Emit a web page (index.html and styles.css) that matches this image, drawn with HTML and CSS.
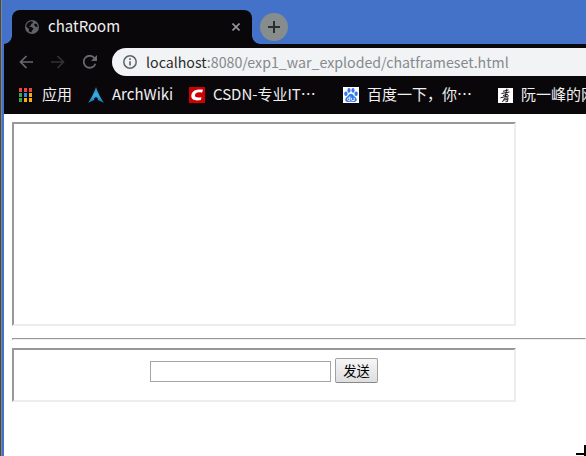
FILE: index.html
```html
<!DOCTYPE html>
<html lang="zh-CN">
<head>
<meta charset="utf-8">
<title>chatRoom</title>
<link rel="stylesheet" href="styles.css">
</head>
<body>
<div class="window">
  <header class="chrome">
    <div class="tabstrip">
      <div class="tab">
        <svg class="globe" viewBox="0 0 14 14"><circle cx="7" cy="7" r="7" fill="#5f6368"/><path d="M6.8 1.2C9 2 7.5 3.7 6.2 3.7L5.8 5.5 3.7 6.2 7 7.2 8.7 8.7 7.4 10.1 6.3 12.4 3.8 11.3 4 9 1.3 6.8C1.2 3.9 3.5 1.2 6.8 1.2Z M9 4.8L10.2 3.6 12 4.2 12.7 7.2 10.6 6.8Z" fill="#0a070b"/></svg>
        <span class="tab-title">chatRoom</span>
        <svg class="close" viewBox="0 0 8 8"><path d="M.5.5l7 7M7.5.5l-7 7" stroke="#92979b" stroke-width="1.6"/></svg>
      </div>
      <div class="new-tab"><svg viewBox="0 0 12 12"><path d="M6 0v12M0 6h12" stroke="#2b2e30" stroke-width="2"/></svg></div>
    </div>
    <div class="toolbar">
      <svg class="nav" viewBox="0 0 14 14"><path d="M14 7H1.5M7.5 1l-6 6 6 6" fill="none" stroke="#66696d" stroke-width="1.7"/></svg>
      <svg class="nav forward" viewBox="0 0 14 14"><path d="M0 7h12.5M6.5 1l6 6-6 6" fill="none" stroke="#343235" stroke-width="1.7"/></svg>
      <svg class="nav reload" viewBox="0 0 14 14"><path d="M12.4 8.7A6 6 0 1 1 11.5 3.1" fill="none" stroke="#66696d" stroke-width="1.8"/><path d="M14 0v6H8z" fill="#66696d"/></svg>
      <div class="address">
        <svg class="info" viewBox="0 0 14 14"><circle cx="7" cy="7" r="6.2" fill="none" stroke="#5f6368" stroke-width="1.5"/><path d="M7 6.2v4.3M7 3.3v1.6" stroke="#5f6368" stroke-width="1.6"/></svg>
        <span class="url"><span class="host">localhost</span>:8080/exp1_war_exploded/chatframeset.html</span>
      </div>
    </div>
    <nav class="bookmarks">
      <div class="bookmark apps">
        <svg viewBox="0 0 13 14"><path d="M0 0h3v4H0zM5 0h3v4H5zM10 0h3v4h-3z" fill="#ef4444"/><path d="M0 5h3v4H0zM0 10h3v4H0z" fill="#37a45a"/><path d="M5 5h3v4H5z" fill="#258cf4"/><path d="M10 5h3v4h-3zM5 10h3v4H5zM10 10h3v4h-3z" fill="#fcae0b"/></svg>
        <span>应用</span>
      </div>
      <div class="bookmark arch">
        <svg viewBox="0 0 16 16"><defs><linearGradient id="arch" x1="0" x2="0" y1="0" y2="1"><stop stop-color="#2385bb"/><stop offset=".5" stop-color="#37aee9"/><stop offset="1" stop-color="#1b78b5"/></linearGradient></defs><path d="M8 0C6.5 5.2 3.2 11.2 0 16c2.5-1.5 4.5-2.4 6.2-2.7-.3-1.6.3-3 1.8-3s2.1 1.4 1.8 3c1.7.3 3.8 1.2 6.2 2.7C12.8 11.2 9.5 5.2 8 0z" fill="url(#arch)"/></svg>
        <span>ArchWiki</span>
      </div>
      <div class="bookmark csdn">
        <svg viewBox="0 0 16 16"><path d="M0 0h16v16H0z" fill="#ce0000"/><path d="M14 2.8L13 5.8C9.5 4.8 6.5 5.3 6 8c-.4 2.4 2.7 2.9 6.5 2.2l-.6 2.8C6.7 14.2 2 13 2.3 8.6 2.6 3.4 8 1.6 14 2.8z" fill="#fff"/></svg>
        <span>CSDN-专业IT⋯</span>
      </div>
      <div class="bookmark baidu">
        <svg viewBox="0 0 16 16"><path d="M0 0h16v16H0z" fill="#fff"/><g fill="#3479ec"><ellipse cx="2.9" cy="6.8" rx="1.7" ry="2.2"/><ellipse cx="6" cy="3.4" rx="1.6" ry="2.3"/><ellipse cx="10" cy="3.4" rx="1.6" ry="2.3"/><ellipse cx="13.1" cy="6.8" rx="1.7" ry="2.2"/><path d="M8 6.8c2 0 2.6 2 4.2 3.3 2.9 2.3 1.4 5.3-1.5 4.9-1.9-.3-3.5-.3-5.4 0-2.9.4-4.4-2.6-1.5-4.9C5.4 8.8 6 6.8 8 6.8z"/></g><path d="M6.8 9.3v4.2H5.5q-1-.1-1-1.2t1-1.2h1.3M8.4 10.8v1.8q0 .9.9.9h1.9v-2.8" fill="none" stroke="#fff" stroke-width=".9"/></svg>
        <span>百度一下，你⋯</span>
      </div>
      <div class="bookmark ruan">
        <svg viewBox="0 0 15 15"><path d="M0 0h15v15H0z" fill="#fff"/><path d="M5 3.3l5.5-1.3M3.5 5.5l8-1.5M5 7.5l5-1.3M8.8.8L7.2 9M2.5 9.8l8.5-2M6.5 10.3L4.5 14M6.5 10.3l3.5-.5-.5 3.7-2 .3M6 12l3.5-.5" fill="none" stroke="#171717" stroke-width="1"/></svg>
        <span>阮一峰的网络</span>
      </div>
    </nav>
  </header>
  <main class="page">
    <section class="frame messages"></section>
    <hr>
    <form class="frame composer">
      <input class="message" type="text" aria-label="message">
      <button class="send" type="button">发送</button>
    </form>
  </main>
</div>
<svg class="pointer" viewBox="0 0 10 11"><path d="M8 0h2v11H8zM0 8h10v2H0z"/></svg>
</body>
</html>
```
FILE: styles.css
```css
* { box-sizing: border-box; }

body {
  margin: 0;
  width: 586px;
  height: 456px;
  overflow: hidden;
  background: #fff;
  font-family: "Noto Sans CJK SC", sans-serif;
  font-size: 15px;
}

svg { display: block; flex: none; }

.window {
  height: 456px;
  border-left: 4px solid #4472c8;
  background: #fff;
  position: relative;
}

.window::before {
  content: "";
  position: absolute;
  left: -4px;
  top: 0;
  width: 2px;
  height: 100%;
  background: linear-gradient(to right, #484848 1px, #7e8694 1px);
}

.chrome {
  height: 114px;
  background: #0a070b;
  overflow: hidden;
}

.tabstrip {
  display: flex;
  align-items: flex-start;
  height: 44px;
  padding: 10px 0 0 8px;
  background: #4472c8;
}

.tab {
  position: relative;
  display: flex;
  align-items: center;
  width: 240px;
  height: 34px;
  padding: 0 12px 0 13px;
  border-radius: 8px 8px 0 0;
  background: #0a070b;
}

.tab::before,
.tab::after {
  content: "";
  position: absolute;
  bottom: 0;
  width: 8px;
  height: 8px;
}

.tab::before {
  left: -8px;
  background: radial-gradient(circle at 0 0, transparent 7.5px, #0a070b 8px);
}

.tab::after {
  right: -8px;
  background: radial-gradient(circle at 100% 0, transparent 7.5px, #0a070b 8px);
}

.globe { width: 14px; height: 14px; }

.tab-title {
  flex: 1;
  margin-left: 9px;
  padding-bottom: 2px;
  line-height: 32px;
  color: #f0f0f0;
}

.close { width: 8px; height: 8px; }

.new-tab {
  display: flex;
  align-items: center;
  justify-content: center;
  width: 28px;
  height: 28px;
  margin: 3px 0 0 8px;
  border-radius: 50%;
  background: #868d8c;
}

.new-tab svg { width: 12px; height: 12px; }

.toolbar {
  display: flex;
  align-items: center;
  height: 36px;
  padding-left: 15px;
}

.nav { width: 14px; height: 14px; }
.forward { margin-left: 18px; }
.reload { margin-left: 18px; }

.address {
  display: flex;
  align-items: center;
  flex: 1;
  height: 28px;
  margin-left: 15px;
  padding-left: 11px;
  border-radius: 14px 0 0 14px;
  background: #f1f3f4;
}

.info { width: 14px; height: 14px; }

.url {
  margin-left: 9px;
  font-size: 14.2px;
  line-height: 28px;
  color: #85898d;
  white-space: nowrap;
}

.host { color: #292b2d; }

.bookmarks {
  display: flex;
  align-items: center;
  height: 30px;
  padding-left: 15px;
  color: #f0f0f0;
  white-space: nowrap;
}

.bookmark {
  display: flex;
  align-items: center;
  flex: none;
  gap: 8px;
}

.bookmark span {
  padding-bottom: 2px;
  line-height: 28px;
}

.bookmark svg { width: 16px; height: 16px; }
.apps { width: 69px; gap: 10px; }
.apps svg { width: 13px; height: 14px; }
.arch { width: 101px; }
.csdn { width: 154px; }
.baidu { width: 155px; }
.ruan svg { width: 15px; height: 15px; }

.page { padding: 8px 0 0 8px; }

.frame {
  width: 504px;
  border: 2px solid;
  border-color: #989898 #ededed #ededed #989898;
}

.messages { height: 204px; }

hr {
  height: 2px;
  margin: 12px 0 8px;
  border: 1px solid;
  border-color: #989898 #ededed #ededed #989898;
}

.composer {
  display: flex;
  justify-content: center;
  align-items: flex-start;
  gap: 4px;
  height: 54px;
  margin: 0;
  padding-top: 8px;
}

.message {
  width: 181px;
  height: 21px;
  margin: 3px 0 0;
  padding: 1px;
  border: 1px solid #a5a5a5;
}

.send {
  width: 43px;
  height: 25px;
  padding: 0;
  border: 1px solid #a0a0a0;
  border-bottom-color: #888;
  border-radius: 2px;
  background: linear-gradient(#f6f6f6, #dedede);
  color: #000;
  font: 13.33px/22px "Noto Sans CJK SC", sans-serif;
}

.pointer {
  position: absolute;
  left: 576px;
  top: 445px;
  width: 10px;
  height: 11px;
}
```
